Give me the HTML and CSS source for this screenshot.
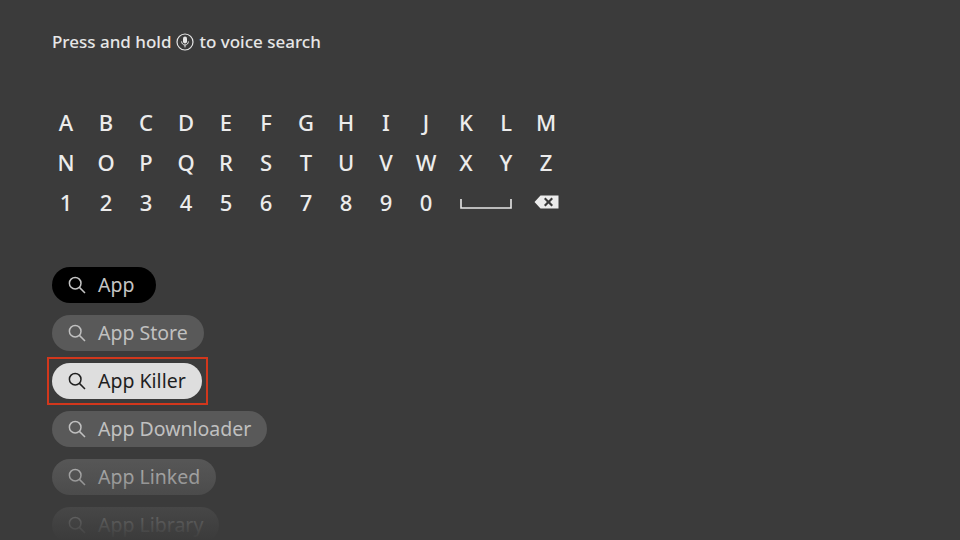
FILE: index.html
```html
<!DOCTYPE html>
<html lang="en">
<head>
<meta charset="utf-8">
<title>Search</title>
<link rel="stylesheet" href="styles.css">
</head>
<body>
<main class="screen">
  <p class="hint"><span>Press and hold</span><svg class="mic" viewBox="0 0 18 18" width="18" height="18" aria-hidden="true"><circle cx="9" cy="9" r="8" fill="none" stroke="#e6e6e6" stroke-width="1.2"/><rect x="7" y="3.600" width="4" height="7" rx="2" fill="#e6e6e6"/><path d="M5.600 8.400c0 2.200 1.500 3.600 3.400 3.600s3.400-1.400 3.400-3.600M9 12v2.400" fill="none" stroke="#e6e6e6" stroke-width="1"/></svg><span>to voice search</span></p>
  <div class="keys">
    <span>A</span><span>B</span><span>C</span><span>D</span><span>E</span><span>F</span><span>G</span><span>H</span><span>I</span><span>J</span><span>K</span><span>L</span><span>M</span>
    <span>N</span><span>O</span><span>P</span><span>Q</span><span>R</span><span>S</span><span>T</span><span>U</span><span>V</span><span>W</span><span>X</span><span>Y</span><span>Z</span>
    <span>1</span><span>2</span><span>3</span><span>4</span><span>5</span><span>6</span><span>7</span><span>8</span><span>9</span><span>0</span>
    <span class="wide"><svg viewBox="0 0 52 12" width="52" height="12" aria-hidden="true"><path d="M1 1v9h50V1" fill="none" stroke="#e6e6e6" stroke-width="1.600"/></svg></span>
    <span class="back"><svg viewBox="0 0 25 14" width="25" height="14" aria-hidden="true"><path fill-rule="evenodd" fill="#ececec" d="M6.500 .5H24.500v13H6.500L.5 7zM11.500 2.600l-1.500 1.500 2.900 2.900-2.900 2.900 1.500 1.500 3-2.900 3 2.900 1.500-1.500-2.900-2.900 2.900-2.900-1.500-1.500-3 2.900z"/></svg></span>
  </div>
  <ul class="results">
    <li class="pill pill-typed"><svg class="lens" viewBox="0 0 18 18" width="18" height="18" aria-hidden="true"><circle cx="7.200" cy="7.200" r="5.800"/><path d="M11.400 11.400l5.600 5.600"/></svg>App</li>
    <li class="pill"><svg class="lens" viewBox="0 0 18 18" width="18" height="18" aria-hidden="true"><circle cx="7.200" cy="7.200" r="5.800"/><path d="M11.400 11.400l5.600 5.600"/></svg>App Store</li>
    <li class="pill pill-focus"><svg class="lens" viewBox="0 0 18 18" width="18" height="18" aria-hidden="true"><circle cx="7.200" cy="7.200" r="5.800"/><path d="M11.400 11.400l5.600 5.600"/></svg>App Killer</li>
    <li class="pill"><svg class="lens" viewBox="0 0 18 18" width="18" height="18" aria-hidden="true"><circle cx="7.200" cy="7.200" r="5.800"/><path d="M11.400 11.400l5.600 5.600"/></svg>App Downloader</li>
    <li class="pill"><svg class="lens" viewBox="0 0 18 18" width="18" height="18" aria-hidden="true"><circle cx="7.200" cy="7.200" r="5.800"/><path d="M11.400 11.400l5.600 5.600"/></svg>App Linked</li>
    <li class="pill"><svg class="lens" viewBox="0 0 18 18" width="18" height="18" aria-hidden="true"><circle cx="7.200" cy="7.200" r="5.800"/><path d="M11.400 11.400l5.600 5.600"/></svg>App Library</li>
  </ul>
  <div class="fade"></div>
</main>
</body>
</html>
```
FILE: styles.css
```css
* { box-sizing: border-box; }
html, body { margin: 0; height: 100%; }
body { background: #3b3b3b; overflow: hidden; }
.screen {
  position: relative;
  width: 960px;
  height: 540px;
  overflow: hidden;
  padding: 29px 0 0 52px;
  font-family: "Noto Sans", "Open Sans", sans-serif;
  color: #ececec;
}
.hint {
  margin: 0;
  height: 24px;
  display: flex;
  align-items: center;
  gap: 5px;
  font-size: 17px;
  font-weight: 500;
  color: #e6e6e6;
  white-space: nowrap;
}
.mic { flex: none; margin-top: 2px; }
.keys {
  display: grid;
  grid-template-columns: repeat(13, 40px);
  grid-auto-rows: 40px;
  margin: 49px 0 0 -6px;
  width: 520px;
  font-size: 22px;
  font-weight: 500;
  color: #ececec;
}
.keys span {
  display: flex;
  align-items: center;
  justify-content: center;
}
.keys .wide { grid-column: span 2; padding-top: 3px; }
.keys .back { padding: 0 0 1px 0; }
.results {
  list-style: none;
  margin: 45px 0 0;
  padding: 0;
  display: flex;
  flex-direction: column;
  align-items: flex-start;
  gap: 12px;
}
.pill {
  position: relative;
  flex: none;
  height: 36px;
  display: flex;
  align-items: center;
  gap: 12px;
  padding: 0 16px;
  border-radius: 18px;
  background: #595959;
  color: #c0c0c0;
  font-size: 19.500px;
  line-height: 36px;
  white-space: nowrap;
}
.lens { flex: none; fill: none; stroke: currentColor; stroke-width: 1.500; }
.pill-typed { background: #000; color: #c4c4c4; padding-right: 22px; }
.pill-focus { background: #dedede; color: #1f1f1f; }
.pill-focus::after {
  content: "";
  position: absolute;
  inset: -6px -6px -6px -5px;
  border: 2px solid #d2371c;
}
.fade {
  position: absolute;
  left: 0;
  right: 0;
  bottom: 0;
  height: 90px;
  background: linear-gradient(to bottom, rgba(59,59,59,0), rgba(59,59,59,.3) 35%, rgba(59,59,59,1) 100%);
}
```
